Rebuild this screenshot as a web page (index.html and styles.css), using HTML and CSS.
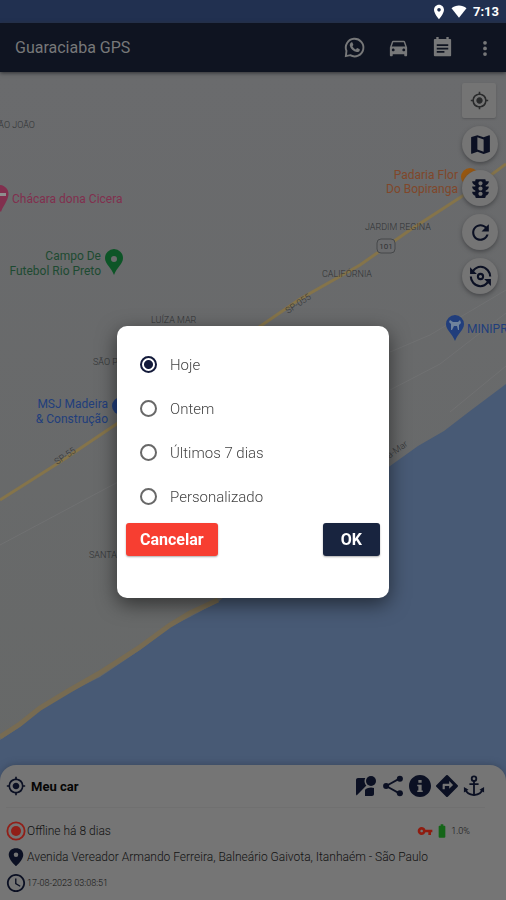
FILE: index.html
```html
<!DOCTYPE html>
<html lang="pt-BR">
<head>
<meta charset="utf-8">
<meta name="viewport" content="width=device-width, initial-scale=1">
<title>Guaraciaba GPS</title>
<link rel="stylesheet" href="styles.css">
</head>
<body>
<div class="app">
  <div class="status">
    <svg class="status-icon" viewBox="0 0 24 24" aria-hidden="true"><path d="M12 1C7.600 1 4.500 4.500 4.500 8.800 4.500 14.500 12 23 12 23s7.500-8.500 7.500-14.200C19.500 4.500 16.400 1 12 1zm0 10.500a2.700 2.700 0 1 1 0-5.400 2.700 2.700 0 0 1 0 5.400z"/></svg>
    <svg class="status-icon wifi" viewBox="0 0 24 20" aria-hidden="true"><path d="M12 19.500 .5 5C7 -.5 17 -.5 23.500 5z"/></svg>
    <span class="clock">7:13</span>
  </div>

  <header class="bar">
    <h1 class="title">Guaraciaba GPS</h1>
    <nav class="actions">
      <button class="action" type="button" aria-label="WhatsApp"><svg viewBox="0 0 24 24"><path class="line" d="M3 21l.6-5.500A9.200 9.200 0 1 1 7.500 20z"/><path d="M8.500 6.800c.5-.4 1.200-.3 1.400.2l.8 1.900c.1.300 0 .6-.2.900l-.7.800c.9 1.600 2.100 2.700 3.700 3.400l.9-1.100c.2-.3.500-.3.800-.2l1.900.9c.5.300.5.800.3 1.400-.4 1.200-1.700 1.900-3 1.700-3.700-.7-6.500-3.300-7.300-6.500-.3-1.400.4-2.700 1.400-3.400z"/></svg></button>
      <button class="action" type="button" aria-label="Veículos"><svg viewBox="0 0 24 24"><path d="M18.920 6.010C18.720 5.420 18.160 5 17.500 5h-11c-.66 0-1.210.42-1.420 1.010L3 12v8c0 .55.45 1 1 1h1c.55 0 1-.45 1-1v-1h12v1c0 .55.45 1 1 1h1c.55 0 1-.45 1-1v-8l-2.080-5.990zM6.500 16c-.83 0-1.500-.67-1.500-1.500S5.670 13 6.500 13s1.500.67 1.500 1.500S7.330 16 6.500 16zm11 0c-.83 0-1.500-.67-1.500-1.500s.67-1.500 1.500-1.500 1.500.67 1.500 1.500-.67 1.500-1.500 1.500zM5 11l1.500-4.500h11L19 11H5z"/></svg></button>
      <button class="action" type="button" aria-label="Relatórios"><svg viewBox="0 0 24 24"><path fill-rule="evenodd" d="M4 3h1.500V1H8v2h8V1h2.500v2H20c.6 0 1 .4 1 1v16c0 .6-.4 1-1 1H4c-.6 0-1-.4-1-1V4c0-.6.4-1 1-1zm2 5.500v2h12v-2zm0 3.700v1.800h12v-1.800zm0 3.500v1.800h8v-1.800z"/></svg></button>
      <button class="action more" type="button" aria-label="Mais opções"><svg viewBox="0 0 24 24"><circle cx="12" cy="5" r="2.500"/><circle cx="12" cy="12.500" r="2.500"/><circle cx="12" cy="20" r="2.500"/></svg></button>
    </nav>
  </header>

  <main class="stage">
    <svg class="map" viewBox="0 72 506 828" preserveAspectRatio="xMinYMin slice" role="img" aria-label="Mapa">
      <defs>
        <linearGradient id="land" x1="0" y1="0" x2="0" y2="1"><stop offset="0" stop-color="#6a6b6d"/><stop offset="1" stop-color="#666867"/></linearGradient>
      </defs>
      <rect x="0" y="72" width="506" height="828" fill="url(#land)"/>
      <path fill="#485a75" d="M0 740 20 727 40 710 70 692 100 677 140 650 170 627 190 617 218 602 300 535 390 466 418 446 444 431 470 411 506 384V900H0z"/>
      <path fill="none" stroke="#776b52" stroke-width="5" d="M0 737 20 724 40 708 70 690 98 674 140 647 170 625 190 613 218 600"/>
      <path class="street" d="M390 390 440 364 506 313M390 352 430 335 506 290M450 412 506 366M0 545 118 482"/>
      <path class="road" d="M0 500 60 462 118 423 190 374 262 325 300 299 360 265 410 230 464 195 506 164"/>
      <g class="area">
        <text x="-7" y="128">SÃO JOÃO</text>
        <text x="151" y="323">LUÍZA MAR</text>
        <text x="365" y="230">JARDIM REGINA</text>
        <text x="322" y="277">CALIFÓRNIA</text>
        <text x="93" y="365">SÃO PAULO</text>
        <text x="89" y="558">SANTA</text>
        <text transform="translate(288 314) rotate(-34)">SP-055</text>
        <text transform="translate(57 465) rotate(-34)">SP-55</text>
        <text transform="translate(366 475) rotate(-35)">Av. Beira-Mar</text>
      </g>
      <rect x="377" y="239" width="18" height="14" rx="4" fill="#6a6b6d" stroke="#46484a"/>
      <text class="shield" x="386" y="249">101</text>
      <g class="place pink"><path d="M0 185a9 9 0 0 1 8 12C7 202 3 206 1 212l-1-1z"/><text x="12" y="203">Chácara dona Cicera</text><path fill="#8e8e8e" d="M0 193h6v3H0z"/></g>
      <g class="place green"><path fill-rule="evenodd" d="M114 249a9 9 0 0 0-9 9c0 6 6 9 9 17 3-8 9-11 9-17a9 9 0 0 0-9-9zm0 7a3 3 0 1 1 0 6 3 3 0 0 1 0-6z"/><text class="end" x="101" y="260">Campo De</text><text class="end" x="101" y="275">Futebol Rio Preto</text></g>
      <g class="place orange"><circle cx="470" cy="177" r="9"/><text class="end" x="458" y="179">Padaria Flor</text><text class="end" x="458" y="193">Do Bopiranga</text></g>
      <g class="place blue"><circle cx="121" cy="406" r="9"/><text class="end" x="108" y="408">MSJ Madeira</text><text class="end" x="108" y="423">&amp; Construção</text></g>
      <g class="place blue"><path d="M455 315a9 9 0 0 0-9 9c0 6 6 9 9 17 3-8 9-11 9-17a9 9 0 0 0-9-9z"/><path fill="#70839c" d="M450 320l3 2h5l2-2 1 3-2 2v5h-1l-1-4h-3l-2 4h-1v-6l-2-2z"/><text x="467" y="333">MINIPR</text></g>
    </svg>

    <div class="tools">
      <button class="locate" type="button" aria-label="Minha localização"><svg viewBox="0 0 24 24"><use href="#gps"/></svg></button>
      <button class="fab" type="button" aria-label="Tipo de mapa"><svg viewBox="0 0 24 24"><path d="M20.500 3l-.16.030L15 5.100 9 3 3.360 4.900c-.21.070-.36.250-.36.480V20.500c0 .28.220.5.5.5l.16-.03L9 18.900l6 2.100 5.640-1.900c.21-.07.36-.25.36-.48V3.500c0-.28-.22-.5-.5-.5zM15 19l-6-2.110V5l6 2.110V19z"/></svg></button>
      <button class="fab" type="button" aria-label="Trânsito"><svg viewBox="0 0 24 24"><path d="M20 10h-3V8.860c1.720-.45 3-2 3-3.860h-3V4c0-.55-.45-1-1-1H8c-.55 0-1 .45-1 1v1H4c0 1.860 1.280 3.410 3 3.860V10H4c0 1.860 1.280 3.410 3 3.860V15H4c0 1.860 1.280 3.410 3 3.860V20c0 .55.45 1 1 1h8c.55 0 1-.45 1-1v-1.140c1.720-.45 3-2 3-3.860h-3v-1.140c1.720-.45 3-2 3-3.860zm-8 9c-1.110 0-2-.9-2-2s.89-2 2-2c1.100 0 2 .9 2 2s-.89 2-2 2zm0-5c-1.110 0-2-.9-2-2s.89-2 2-2c1.100 0 2 .9 2 2s-.89 2-2 2zm0-5c-1.110 0-2-.9-2-2 0-1.110.89-2 2-2 1.100 0 2 .89 2 2 0 1.100-.9 2-2 2z"/></svg></button>
      <button class="fab" type="button" aria-label="Atualizar"><svg viewBox="0 0 24 24"><path d="M17.650 6.350C16.200 4.900 14.210 4 12 4c-4.420 0-7.990 3.580-7.990 8s3.570 8 7.990 8c3.730 0 6.840-2.550 7.730-6h-2.080c-.82 2.330-3.040 4-5.650 4-3.310 0-6-2.690-6-6s2.690-6 6-6c1.660 0 3.140.69 4.220 1.780L13 11h7V4l-2.350 2.350z"/></svg></button>
      <button class="fab" type="button" aria-label="Girar câmera"><svg viewBox="0 0 24 24"><path class="line" d="M5 6.500C9 1.500 15 1.500 19 6c1.500 1.800 2.300 4 2.300 6M19 17.500C15 22.500 9 22.500 5 18c-1.500-1.800-2.300-4-2.300-6"/><path d="M2 3v6.500h6.500zM22 21v-6.500h-6.500z"/><circle class="line" cx="12" cy="12" r="2.500"/></svg></button>
    </div>

    <section class="sheet" aria-label="Meu car">
      <div class="sheet-head">
        <svg class="icon" viewBox="0 0 24 24" aria-hidden="true"><path id="gps" d="M12 8c-2.210 0-4 1.790-4 4s1.790 4 4 4 4-1.790 4-4-1.790-4-4-4zm8.940 3A8.994 8.994 0 0 0 13 3.060V1h-2v2.060A8.994 8.994 0 0 0 3.060 11H1v2h2.060A8.994 8.994 0 0 0 11 20.940V23h2v-2.060A8.994 8.994 0 0 0 20.940 13H23v-2h-2.060zM12 19c-3.870 0-7-3.130-7-7s3.130-7 7-7 7 3.130 7 7-3.130 7-7 7z"/></svg>
        <h2 class="name">Meu car</h2>
        <div class="links">
          <button class="link" type="button" aria-label="Street View"><svg viewBox="2 0 22 22"><path d="M12.560 14.330c-.34.270-.56.700-.56 1.170V21h7c1.100 0 2-.9 2-2v-5.980c-.94-.33-1.950-.52-3-.52-2.030 0-3.930.7-5.440 1.830z"/><circle cx="18" cy="6" r="5"/><path d="M11.500 6c0-1.080.27-2.100.74-3H5c-1.100 0-2 .9-2 2v14c0 .55.230 1.050.59 1.410l9.820-9.820C12.230 9.420 11.500 7.800 11.500 6z"/></svg></button>
          <button class="link" type="button" aria-label="Compartilhar"><svg viewBox="0 0 24 24"><path d="M4.500 12 19 4M4.500 12 19 20" class="line"/><circle cx="4.500" cy="12" r="3.300"/><circle cx="19.500" cy="4" r="3.300"/><circle cx="19.500" cy="20" r="3.300"/></svg></button>
          <button class="link" type="button" aria-label="Informações"><svg viewBox="2 2 20 20"><path d="M12 2C6.480 2 2 6.480 2 12s4.480 10 10 10 10-4.480 10-10S17.520 2 12 2zm1.500 15.500h-4v-1.300h1v-4h-1v-1.400h4v5.400h1v1.300zm0-8.500h-3V6.500h3z"/></svg></button>
          <button class="link" type="button" aria-label="Rotas"><svg viewBox="2 2 20 20"><path d="M21.710 11.290l-9-9a.9959.9959 0 0 0-1.410 0l-9 9a.9959.9959 0 0 0 0 1.410l9 9c.39.390 1.020.39 1.410 0l9-9c.39-.38.39-1.010 0-1.410zM14 14.500V12h-4v3H8v-4c0-.55.45-1 1-1h5V7.500l3.500 3.500-3.500 3.500z"/></svg></button>
          <button class="link" type="button" aria-label="Âncora"><svg viewBox="0 0 24 24"><circle class="line" cx="12" cy="4" r="2.500"/><path class="line" d="M12 6.500V22M7 10h10M2.500 15c1 4.500 5 6.500 9.500 7 4.500-.5 8.500-2.500 9.500-7"/><path d="M1 13v6l5-3zM23 13v6l-5-3z"/></svg></button>
        </div>
      </div>
      <div class="rows">
        <div class="row">
          <svg class="icon red" viewBox="1 1 22 22" aria-hidden="true"><circle class="line" cx="12" cy="12" r="9.500"/><circle cx="12" cy="12" r="5.500"/></svg>
          <span>Offline há 8 dias</span>
          <span class="power">
            <svg class="key" viewBox="0 5 24 14" aria-hidden="true"><path d="M12.650 10C11.830 7.670 9.610 6 7 6c-3.310 0-6 2.690-6 6s2.690 6 6 6c2.610 0 4.830-1.670 5.650-4H17v4h4v-4h2v-4H12.650zM7 14c-1.100 0-2-.9-2-2s.9-2 2-2 2 .9 2 2-.9 2-2 2z"/></svg>
            <svg class="battery" viewBox="6 2 12 20" aria-hidden="true"><path d="M15.670 4H14V2h-4v2H8.330C7.600 4 7 4.600 7 5.330v15.330C7 21.400 7.600 22 8.330 22h7.330c.74 0 1.340-.6 1.340-1.330V5.330C17 4.600 16.400 4 15.670 4z"/></svg>
            <span class="small">1.0%</span>
          </span>
        </div>
        <div class="row">
          <svg class="icon" viewBox="1 1 22 22" aria-hidden="true"><path d="M12 2.500C7.300 2.500 4 5.500 4 9.700 4 15 12 22 12 22s8-7 8-12.300c0-4.200-3.300-7.200-8-7.200zm0 9.500a2.500 2.500 0 1 1 0-5 2.500 2.500 0 0 1 0 5z"/></svg>
          <span>Avenida Vereador Armando Ferreira, Balneário Gaivota, Itanhaém - São Paulo</span>
        </div>
        <div class="row">
          <svg class="icon" viewBox="1 1 22 22" aria-hidden="true"><path d="M11.990 2C6.470 2 2 6.480 2 12s4.470 10 9.990 10C17.520 22 22 17.520 22 12S17.520 2 11.990 2zM12 20c-4.420 0-8-3.580-8-8s3.580-8 8-8 8 3.580 8 8-3.580 8-8 8zm.5-13H11v6l5.250 3.150.75-1.230-4.500-2.670z"/></svg>
          <span class="small">17-08-2023 03:08:51</span>
        </div>
      </div>
    </section>
  </main>
</div>

<div class="overlay">
  <form class="dialog" role="dialog" aria-label="Período">
    <div class="options">
      <label class="option"><input type="radio" name="period" checked><span>Hoje</span></label>
      <label class="option"><input type="radio" name="period"><span>Ontem</span></label>
      <label class="option"><input type="radio" name="period"><span>Últimos 7 dias</span></label>
      <label class="option"><input type="radio" name="period"><span>Personalizado</span></label>
    </div>
    <div class="buttons">
      <button class="btn cancel" type="button">Cancelar</button>
      <button class="btn ok" type="button">OK</button>
    </div>
  </form>
</div>
</body>
</html>
```
FILE: styles.css
```css
* { box-sizing: border-box; }
body {
  margin: 0;
  font-family: Roboto, "Liberation Sans", sans-serif;
  background: #757575;
}
button {
  display: grid;
  place-items: center;
  padding: 0;
  border: 0;
  background: none;
  color: inherit;
  font: inherit;
}
svg { display: block; fill: currentColor; }
.line { fill: none; stroke: currentColor; stroke-width: 2; }

.app { display: flex; flex-direction: column; min-height: 100vh; }

.status {
  display: flex;
  align-items: center;
  justify-content: flex-end;
  gap: 4px;
  height: 23px;
  padding-right: 7px;
  background: #213050;
  color: #fff;
}
.status-icon { width: 16px; height: 16px; }
.wifi { width: 16px; height: 13px; }
.clock { padding-left: 2px; font-size: 13px; font-weight: 700; }

.bar {
  position: relative;
  z-index: 1;
  display: flex;
  align-items: center;
  justify-content: space-between;
  height: 49px;
  padding: 0 10px 0 15px;
  background: #0f1421;
  color: #777879;
  box-shadow: 0 1px 4px #2c2e32;
}
.title { margin: 0; font-size: 16px; font-weight: 400; }
.actions { display: flex; align-items: center; gap: 20px; }
.action svg { width: 23px; height: 23px; }
.action { width: 24px; }
.more { width: 22px; }
.more svg { width: 18px; height: 18px; }

.stage {
  position: relative;
  display: flex;
  flex: 1;
  flex-direction: column;
  justify-content: flex-end;
}
.map { position: absolute; inset: 0; width: 100%; height: 100%; }
.street { fill: none; stroke: #707172; stroke-width: 1; }
.road { fill: none; stroke: #85744a; stroke-width: 3; }
.area { fill: #303234; font-size: 9px; font-weight: 300; }
.shield { fill: #303234; font-size: 8px; text-anchor: middle; }
.place { font-size: 12px; }
.end { text-anchor: end; }
.pink { fill: #812f4e; }
.green { fill: #1d4a31; }
.green path { fill: #0d5527; }
.orange { fill: #80472a; }
.orange circle { fill: #98570f; }
.blue { fill: #213e7c; }

.tools {
  position: absolute;
  top: 11px;
  right: 8px;
  display: flex;
  flex-direction: column;
  gap: 8px;
  color: #0b1023;
}
.locate {
  width: 34px;
  height: 35px;
  border-radius: 2px;
  background: #747474;
  color: #292a2b;
  box-shadow: 0 1px 2px #57585a;
}
.locate svg { width: 19px; height: 19px; }
.fab {
  width: 36px;
  height: 36px;
  border-radius: 50%;
  background: #757575;
  box-shadow: 0 2px 4px #47484a;
}
.fab svg { width: 25px; height: 25px; }

.sheet {
  position: relative;
  padding: 0 6px 4px;
  border-radius: 16px 16px 0 0;
  background: #757575;
  color: #0b1023;
  box-shadow: 0 -1px 6px #3b4960;
}
.sheet-head { display: flex; align-items: center; height: 43px; margin-right: 15px; border-bottom: 1px solid #707070; }
.icon { flex: none; width: 20px; height: 20px; }
.name { flex: 1; margin: 0 0 0 5px; font-size: 13px; font-weight: 700; color: #050505; }
.links { display: flex; gap: 5px; }
.link svg { width: 22px; height: 22px; }
.rows { padding-top: 10px; }
.row { display: flex; align-items: center; gap: 1px; height: 26px; font-size: 12px; font-weight: 300; color: #111; }
.row .icon { color: #0b1023; }
.row .icon.red { color: #911f18; }
.small { font-size: 9px; }
.power { display: flex; align-items: center; gap: 5px; margin-left: auto; padding-right: 30px; }
.key { width: 16px; height: 10px; color: #8f1c10; }
.battery { width: 8px; height: 14px; color: #146518; }

.overlay {
  position: fixed;
  inset: 23px 0 0;
  z-index: 2;
  display: grid;
  place-items: center;
}
.dialog {
  width: 272px;
  padding: 17px 9px 42px;
  border-radius: 10px;
  background: #fff;
  box-shadow: 0 6px 20px #0008;
}
.options { padding-left: 14px; }
.option { display: flex; align-items: center; gap: 13px; height: 44px; font-size: 15px; font-weight: 300; color: #444; }
.option input {
  appearance: none;
  width: 17px;
  height: 17px;
  margin: 0;
  border: 2px solid #686868;
  border-radius: 50%;
}
.option input:checked {
  border-color: #131a3a;
  background: radial-gradient(circle, #131a3a 4px, #fff 5px);
}
.buttons { display: flex; justify-content: space-between; padding-top: 4px; }
.btn {
  height: 33px;
  padding: 0 14px;
  border-radius: 3px;
  color: #fff;
  font-size: 16px;
  font-weight: 700;
  box-shadow: 0 1px 2px #0005;
}
.cancel { background: #f73e31; }
.ok { padding: 0 18px; background: #18243f; }
```
